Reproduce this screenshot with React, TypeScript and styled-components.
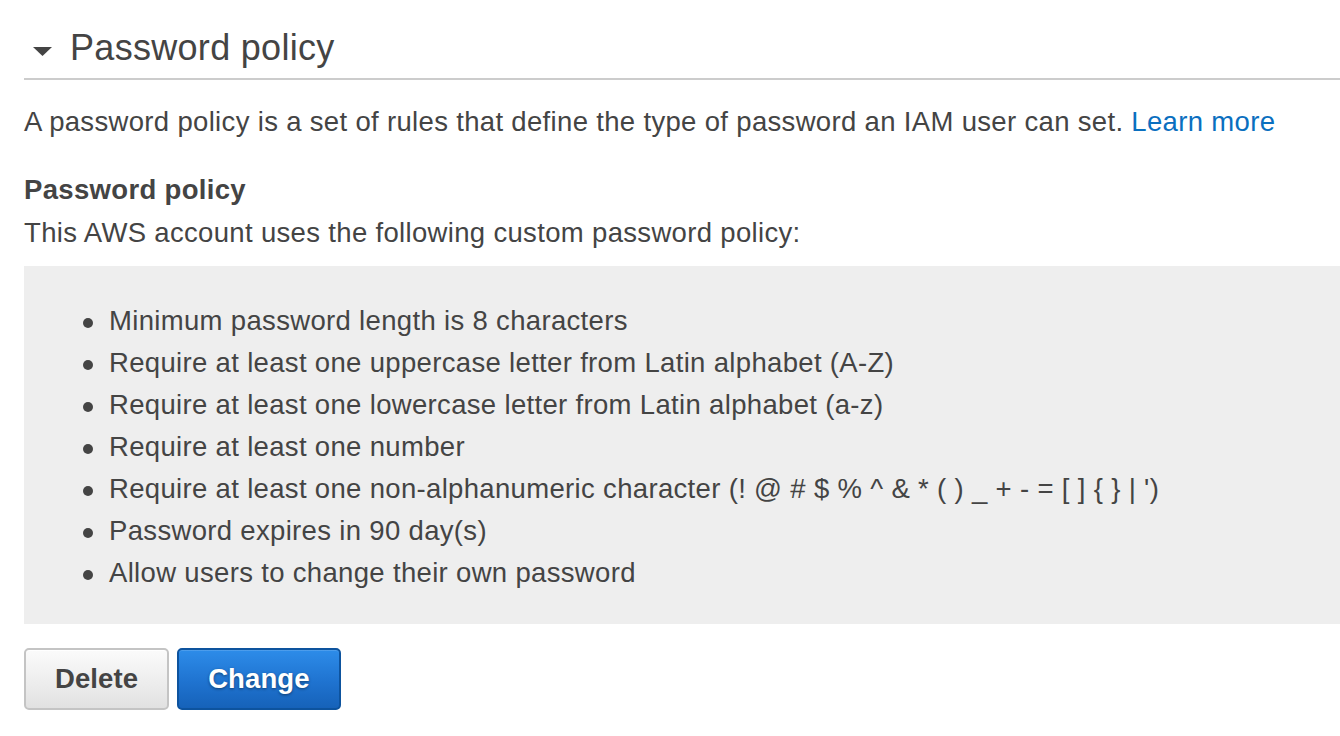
import React from "react";
import styled, { createGlobalStyle } from "styled-components";

const Global = createGlobalStyle`
  html, body { margin: 0; padding: 0; background: #fff; }
  body { font-family: "Liberation Sans", Arial, Helvetica, sans-serif; color: #444; }
`;

const Page = styled.div`
  padding-left: 24px;
  width: 1316px;
  font-size: 27.5px;
  letter-spacing: 0.33px;
`;

const Header = styled.div`
  display: flex;
  align-items: center;
  padding: 26px 0 8px;
  border-bottom: 2px solid #cccccc;
`;

const Caret = styled.svg`
  width: 19px;
  height: 9px;
  margin: 7px 18px 0 9px;
  flex: none;
`;

const Title = styled.h2`
  margin: 0;
  font-size: 36px;
  font-weight: 400;
  line-height: 44px;
  letter-spacing: 0.3px;
  color: #444;
`;

const Description = styled.p`
  margin: 22px 0 0;
  line-height: 40px;
  white-space: nowrap;
`;

const Link = styled.a`
  color: #0a6fbf;
  text-decoration: none;
`;

const Section = styled.div`
  margin-top: 28px;
  line-height: 40px;
`;

const SectionTitle = styled.div`
  font-weight: 700;
`;

const SectionText = styled.div`
  margin-top: 3px;
`;

const PolicyBox = styled.ul`
  list-style: none;
  margin: 13px 0 0;
  padding: 34px 0 30px 59px;
  background: #eeeeee;
`;

const Item = styled.li`
  display: flex;
  align-items: center;
  line-height: 42px;
  white-space: nowrap;
`;

const Dot = styled.span`
  width: 10px;
  height: 10px;
  border-radius: 50%;
  background: #444;
  margin: 3px 16px 0 0;
  flex: none;
`;

const Actions = styled.div`
  display: flex;
  gap: 8px;
  margin-top: 24px;
`;

const Button = styled.button<{ $primary?: boolean }>`
  height: 62px;
  padding: 0 29px;
  border-radius: 5px;
  font-family: "Liberation Sans", Arial, Helvetica, sans-serif;
  font-size: 27.5px;
  font-weight: 700;
  letter-spacing: 0.1px;
  cursor: pointer;
  border: 2px solid ${(p) => (p.$primary ? "#0d539e" : "#c4c4c4")};
  color: ${(p) => (p.$primary ? "#fff" : "#444")};
  background: ${(p) =>
    p.$primary
      ? "linear-gradient(to bottom, #2d8ce9 0%, #1f73d0 55%, #1662b9 100%)"
      : "linear-gradient(to bottom, #fbfbfb 0%, #ececec 60%, #e1e1e1 100%)"};
  text-shadow: ${(p) => (p.$primary ? "0 1px 3px rgba(0,0,0,0.45)" : "none")};
  box-shadow: ${(p) => (p.$primary ? "inset 0 1px 0 rgba(255,255,255,0.15)" : "inset 0 1px 0 #fff")};
`;

const rules = [
  "Minimum password length is 8 characters",
  "Require at least one uppercase letter from Latin alphabet (A-Z)",
  "Require at least one lowercase letter from Latin alphabet (a-z)",
  "Require at least one number",
  "Require at least one non-alphanumeric character (! @ # $ % ^ & * ( ) _ + - = [ ] { } | ')",
  "Password expires in 90 day(s)",
  "Allow users to change their own password",
];

export default function App() {
  return (
    <>
      <Global />
      <Page>
        <Header>
          <Caret viewBox="0 0 19 9">
            <path d="M0 0 L19 0 L9.5 9 Z" fill="#444" />
          </Caret>
          <Title>Password policy</Title>
        </Header>
        <Description>
          A password policy is a set of rules that define the type of password an IAM user can set.{" "}
          <Link href="#">Learn more</Link>
        </Description>
        <Section>
          <SectionTitle>Password policy</SectionTitle>
          <SectionText>This AWS account uses the following custom password policy:</SectionText>
        </Section>
        <PolicyBox>
          {rules.map((r) => (
            <Item key={r}>
              <Dot />
              {r}
            </Item>
          ))}
        </PolicyBox>
        <Actions>
          <Button>Delete</Button>
          <Button $primary>Change</Button>
        </Actions>
      </Page>
    </>
  );
}
